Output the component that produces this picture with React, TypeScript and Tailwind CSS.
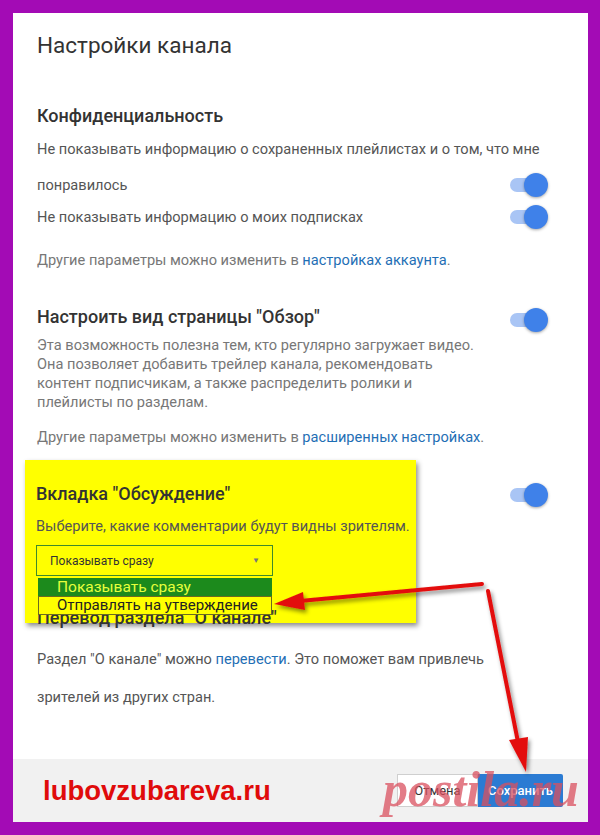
import React from 'react';

function Toggle() {
  return (
    <div className="flex items-center w-[42px] h-[24px] shrink-0">
      <div className="w-[34px] h-[14px] rounded-full bg-[#a9c5f5]" />
      <div className="-ml-[20px] w-[24px] h-[24px] rounded-full bg-[#3f81e9] shadow-[0_1px_3px_rgba(0,0,0,0.35)]" />
    </div>
  );
}

function Arrows() {
  return (
    <svg className="absolute inset-0 pointer-events-none z-30" width="600" height="835" viewBox="0 0 600 835">
      <defs>
        <filter id="sh" x="-20%" y="-20%" width="140%" height="140%">
          <feDropShadow dx="2" dy="3" stdDeviation="2" floodColor="#000" floodOpacity="0.45" />
        </filter>
      </defs>
      <g filter="url(#sh)" fill="#e3100f" stroke="#e3100f" strokeLinecap="round">
        <line x1="482" y1="584" x2="300" y2="601" strokeWidth="4" />
        <polygon points="274,604 303,592 305,610" stroke="none" />
        <line x1="488" y1="591" x2="518" y2="742" strokeWidth="4" />
        <polygon points="526,772 509,740 528,737" stroke="none" />
      </g>
    </svg>
  );
}

export default function App() {
  return (
    <div className="relative w-[600px] h-[835px] bg-[#a30bb5] pt-[13px] pl-[13px] font-['Roboto',sans-serif]">
      <div className="w-[575px] h-[809px] bg-white flex flex-col">
        <div className="flex-1 pl-[24px] pr-[36px] pt-[18px]">
          <h1 className="text-[22.5px] leading-[28px] text-[#333]">Настройки канала</h1>

          <h2 className="mt-[45px] text-[18px] leading-[24px] font-medium text-[#333]">Конфиденциальность</h2>
          <div className="mt-[3px] flex items-end justify-between">
            <p className="text-[14.6px] leading-[36px] text-[#555] whitespace-nowrap">
              Не показывать информацию о сохраненных плейлистах и о том, что мне
              <br />
              понравилось
            </p>
            <div className="mb-[6px] -ml-[46px]"><Toggle /></div>
          </div>
          <div className="flex items-center justify-between">
            <p className="text-[14.6px] leading-[28px] text-[#555]">Не показывать информацию о моих подписках</p>
            <Toggle />
          </div>
          <p className="mt-[17px] text-[14.6px] leading-[24px] text-[#777]">
            Другие параметры можно изменить в <span className="text-[#1f6fb5]">настройках аккаунта</span>.
          </p>

          <div className="mt-[33px] flex items-start justify-between">
            <h2 className="text-[18px] leading-[24px] font-medium text-[#333]">Настроить вид страницы "Обзор"</h2>
            <div className="mt-[3px]"><Toggle /></div>
          </div>
          <p className="mt-[4px] text-[14.6px] leading-[19px] text-[#777]">
            Эта возможность полезна тем, кто регулярно загружает видео.
            <br />
            Она позволяет добавить трейлер канала, рекомендовать
            <br />
            контент подписчикам, а также распределить ролики и
            <br />
            плейлисты по разделам.
          </p>
          <p className="mt-[13px] text-[14.6px] leading-[24px] text-[#777]">
            Другие параметры можно изменить в <span className="text-[#1f6fb5]">расширенных настройках</span>.
          </p>

          <div className="mt-[11px] -mb-[17px] flex items-start justify-between">
            <div className="relative -ml-[12px] w-[391px] bg-[#ffff00] pl-[11px] pt-[22px] pb-[47px] shadow-[2px_3px_5px_rgba(0,0,0,0.45)]">
              <h2 className="text-[18px] leading-[24px] font-medium text-[#333]">Вкладка "Обсуждение"</h2>
              <p className="mt-[8px] text-[14.6px] leading-[24px] text-[#555] whitespace-nowrap">Выберите, какие комментарии будут видны зрителям.</p>
              <div className="relative mt-[7px] w-[237px] h-[31px] border border-[#3f8a2c] flex items-center justify-between pl-[13px] pr-[12px]">
                <span className="text-[12px] text-[#333]">Показывать сразу</span>
                <span className="text-[8px] text-[#777]">▼</span>
                <div className="absolute left-[1px] top-[32px] w-[234px] z-20 whitespace-nowrap">
                  <div className="h-[18px] bg-[#1c8a1c] pl-[19px] text-[15.5px] leading-[18px] text-[#e6ff3c]">Показывать сразу</div>
                  <div className="h-[19px] bg-[#ffff00] border border-[#6b6b20] pl-[18px] text-[15px] leading-[17px] text-[#222]">Отправлять на утверждение</div>
                </div>
              </div>
            </div>
            <div className="mt-[23px]"><Toggle /></div>
          </div>

          <h2 className="relative z-10 text-[18px] leading-[24px] font-medium text-[#333]">Перевод раздела "О канале"</h2>
          <p className="mt-[10px] text-[14.6px] leading-[38px] text-[#555]">
            Раздел "О канале" можно <span className="text-[#1f6fb5]">перевести</span>. Это поможет вам привлечь
            <br />
            зрителей из других стран.
          </p>
        </div>

        <div className="h-[63px] bg-[#f1f1f1] flex items-center justify-between pl-[30px] pr-[25px]">
          <span className="font-['Liberation_Sans',sans-serif] font-bold text-[27.5px] text-[#e00b0b]">lubovzubareva.ru</span>
          <div className="flex items-center">
            <button className="w-[81px] h-[33px] bg-white border border-[#cfcfcf] text-[13px] text-[#333]">Отмена</button>
            <button className="w-[85px] h-[33px] bg-[#2b7bd3] rounded-r-[2px] text-[13px] font-medium text-white">Сохранить</button>
          </div>
        </div>
      </div>

      <Arrows />
      <span className="absolute left-[383px] top-[760px] z-40 font-['Liberation_Serif',serif] italic font-bold text-[50px] leading-[58px] text-[#d9505f]/75">postila.ru</span>
    </div>
  );
}
